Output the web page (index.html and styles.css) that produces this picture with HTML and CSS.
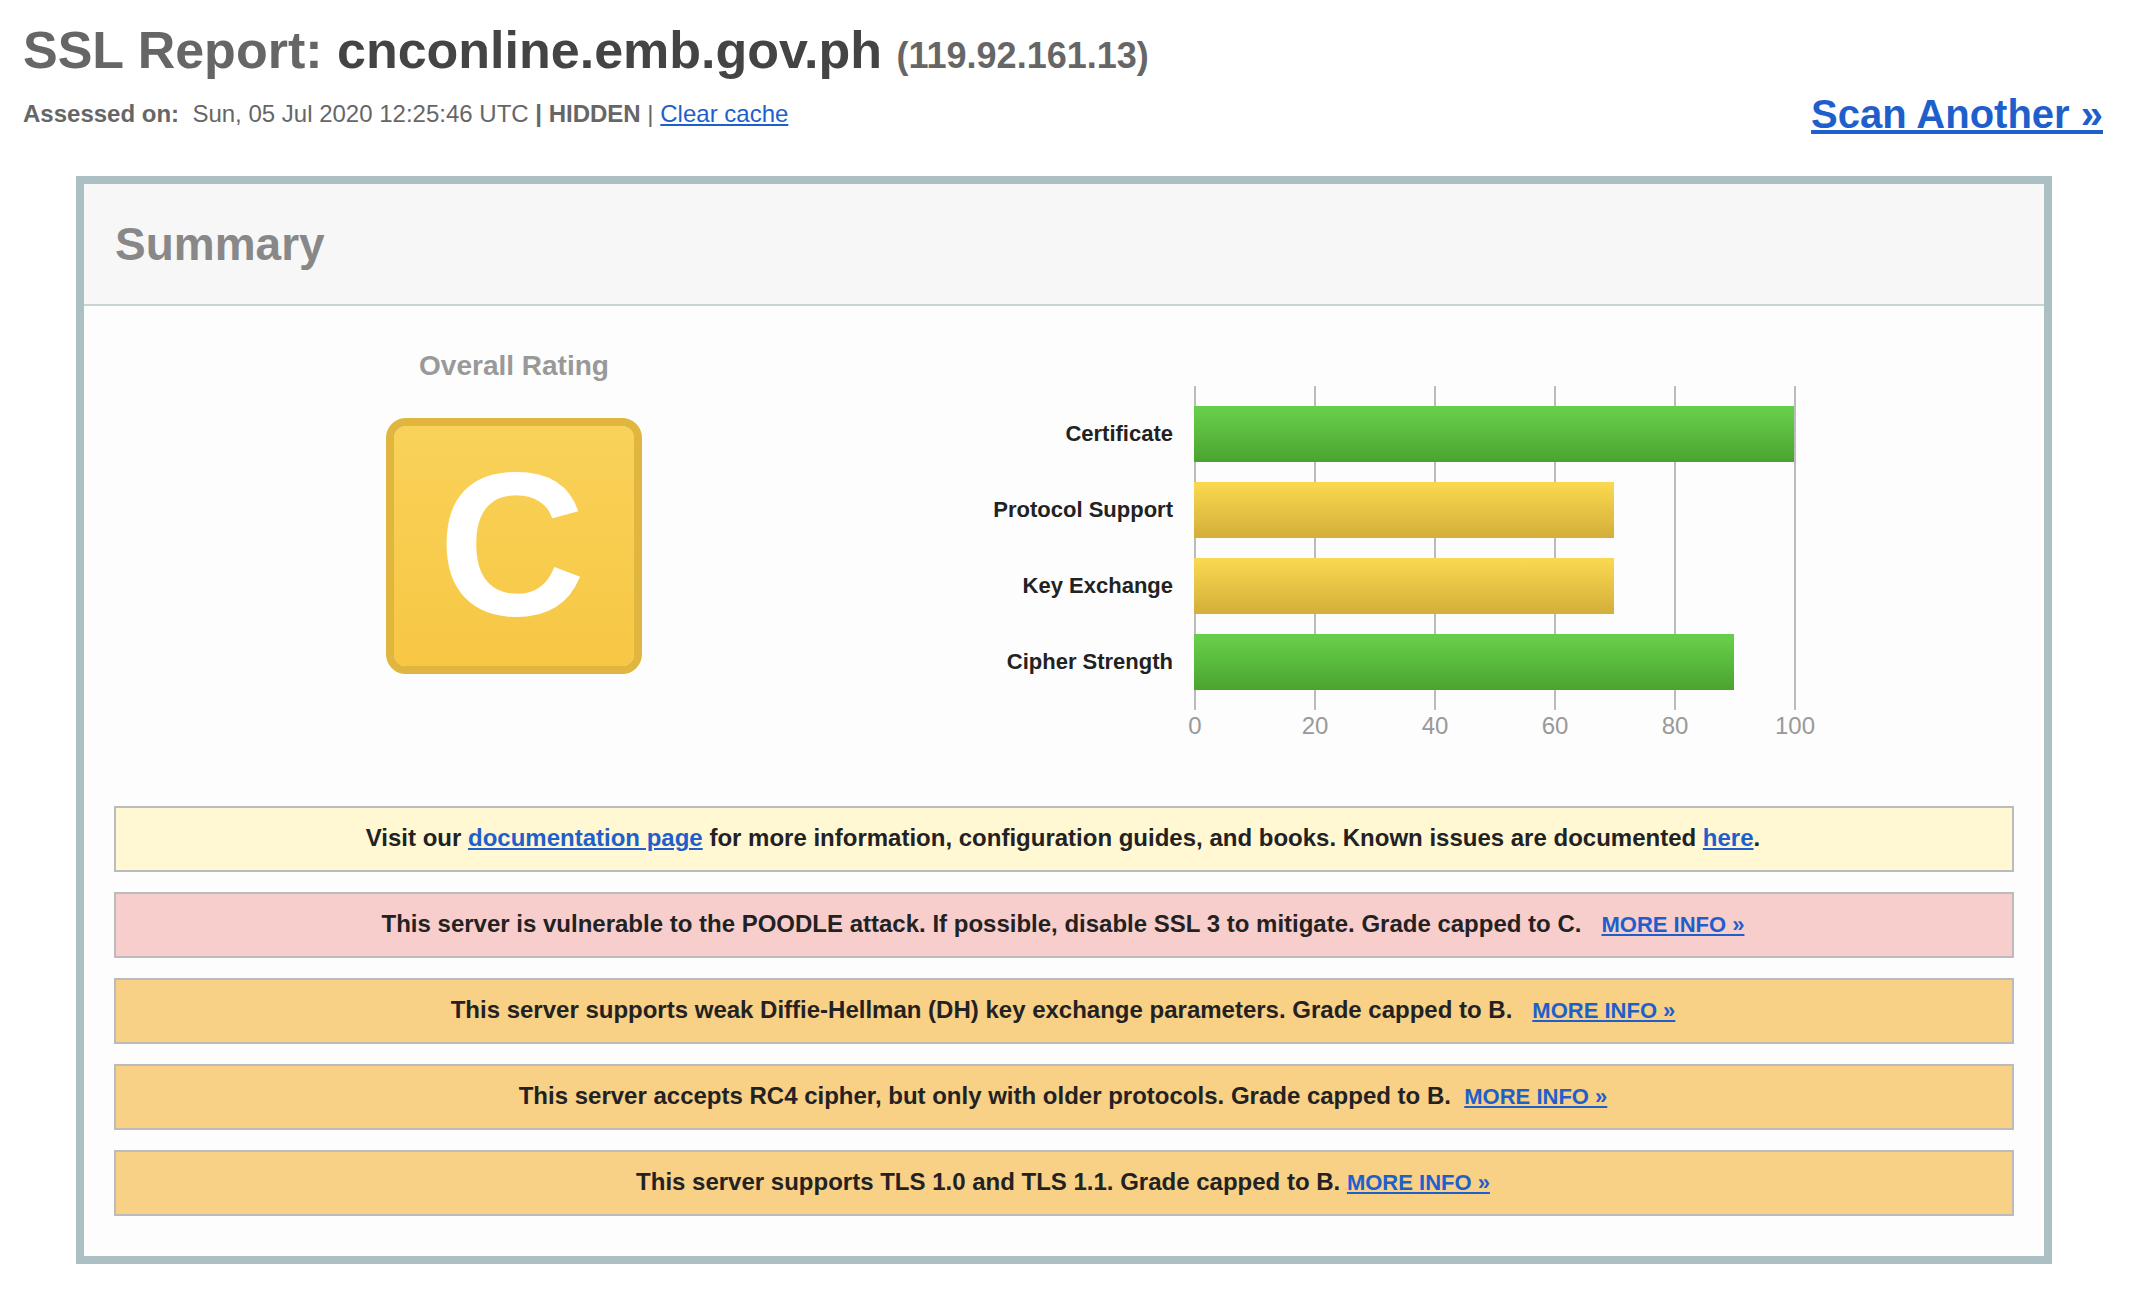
FILE: index.html
```html
<!DOCTYPE html>
<html lang="en">
<head>
<meta charset="utf-8">
<title>SSL Report: cnconline.emb.gov.ph</title>
<link rel="stylesheet" href="styles.css">
</head>
<body>
<header class="report-header">
  <h1 class="report-title">SSL Report: <span class="host">cnconline.emb.gov.ph</span> <span class="ip">(119.92.161.13)</span></h1>
  <div class="report-meta">
    <div><b>Assessed on:</b>&nbsp; Sun, 05 Jul 2020 12:25:46 UTC <b>|</b> <b>HIDDEN</b> | <a href="#clear">Clear cache</a></div>
    <a class="scan-another" href="#scan">Scan Another »</a>
  </div>
</header>
<main class="panel">
  <h2 class="panel-title">Summary</h2>
  <div class="panel-body">
    <div class="overview">
      <section class="rating">
        <h3 class="rating-title">Overall Rating</h3>
        <div class="grade">C</div>
      </section>
      <section class="chart">
        <div class="chart-main">
          <div class="chart-labels">
            <div>Certificate</div>
            <div>Protocol Support</div>
            <div>Key Exchange</div>
            <div>Cipher Strength</div>
          </div>
          <div class="plot">
            <div class="bar good" style="width:100%"></div>
            <div class="bar fair" style="width:70%"></div>
            <div class="bar fair" style="width:70%"></div>
            <div class="bar good" style="width:90%"></div>
          </div>
        </div>
        <div class="axis"><span>0</span><span>20</span><span>40</span><span>60</span><span>80</span><span>100</span></div>
      </section>
    </div>
    <div class="messages">
      <p class="message info">Visit our <a href="#docs">documentation page</a> for more information, configuration guides, and books. Known issues are documented <a href="#issues">here</a>.</p>
      <p class="message error">This server is vulnerable to the POODLE attack. If possible, disable SSL 3 to mitigate. Grade capped to C. &nbsp;&nbsp;<a class="more" href="#poodle">MORE INFO »</a></p>
      <p class="message warning">This server supports weak Diffie-Hellman (DH) key exchange parameters. Grade capped to B. &nbsp;&nbsp;<a class="more" href="#dh">MORE INFO »</a></p>
      <p class="message warning">This server accepts RC4 cipher, but only with older protocols. Grade capped to B. &nbsp;<a class="more" href="#rc4">MORE INFO »</a></p>
      <p class="message warning">This server supports TLS 1.0 and TLS 1.1. Grade capped to B. <a class="more" href="#tls">MORE INFO »</a></p>
    </div>
  </div>
</main>
</body>
</html>
```
FILE: styles.css
```css
* { box-sizing: border-box; }
body {
  margin: 0;
  background: #fff;
  color: #222;
  font: 24px/28px Arial, "Liberation Sans", sans-serif;
}
h1, h2, h3, p { margin: 0; }
a { color: #1f5fcc; }

.report-header { padding: 20px 29px 0 23px; color: #666; }
.report-title { font-size: 52px; line-height: 60px; }
.host { color: #444; }
.ip { font-size: 36px; line-height: 1; }
.report-meta {
  display: flex;
  justify-content: space-between;
  align-items: center;
  margin-top: 10px;
  line-height: 48px;
}
.scan-another { font-size: 40px; font-weight: bold; }

.panel {
  margin: 38px 80px 28px 76px;
  border: 8px solid #acc0c3;
  background: #fdfdfd;
}
.panel-title {
  padding: 32px 31px;
  border-bottom: 2px solid #c8d4d5;
  background: #f7f7f7;
  color: #888;
  font-size: 46px;
  line-height: 56px;
}
.panel-body { padding: 40px 30px; }

.overview { display: grid; grid-template-columns: 8fr 11fr; }
.rating { display: flex; flex-direction: column; align-items: center; gap: 32px; }
.rating-title { color: #999; font-size: 28px; line-height: 40px; }
.grade {
  width: 256px;
  height: 256px;
  padding-right: 4px;
  border: 8px solid #e0b63f;
  border-radius: 20px;
  background: linear-gradient(#f9d259, #f7c744) padding-box;
  color: #fff;
  font-size: 204px;
  font-weight: bold;
  line-height: 236px;
  text-align: center;
}

.chart { padding-top: 40px; }
.chart-main { display: flex; gap: 21px; }
.chart-labels {
  display: grid;
  gap: 20px;
  width: 259px;
  padding: 20px 0;
  font-size: 22px;
  font-weight: bold;
  line-height: 56px;
  text-align: right;
}
.plot {
  display: grid;
  gap: 20px;
  width: 602px;
  padding: 20px 2px 20px 0;
  background: repeating-linear-gradient(to right, #bbb 0 2px, transparent 2px 120px);
}
.bar { height: 56px; }
.good { background: linear-gradient(#66cd49 10%, #4ba32f); }
.fair { background: linear-gradient(#f9d74f 5%, #d3ae39); }
.axis {
  display: grid;
  grid-template-columns: repeat(6, 120px);
  padding-left: 221px;
  color: #999;
  line-height: 32px;
  text-align: center;
}

.messages { display: grid; gap: 20px; margin-top: 64px; }
.message {
  padding: 16px 22px 18px 20px;
  border: 2px solid #bbb;
  font-weight: bold;
  text-align: center;
}
.info { background: #fff8d3; }
.error { background: #f8cecd; }
.warning { background: #f8d086; }
.more { font-size: 22px; line-height: 1; }
```
